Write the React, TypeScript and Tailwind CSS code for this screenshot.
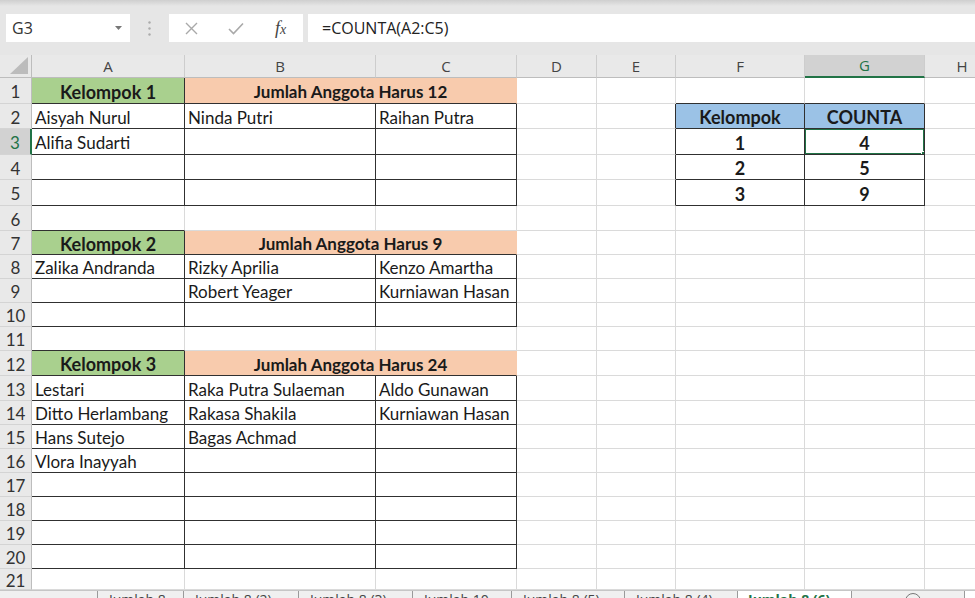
import React from "react";

const COLS = [
  { key: "A", w: "w-[153px]" },
  { key: "B", w: "w-[191px]" },
  { key: "C", w: "w-[141px]" },
  { key: "D", w: "w-[80px]" },
  { key: "E", w: "w-[79px]" },
  { key: "F", w: "w-[129px]" },
  { key: "G", w: "w-[120px]" },
  { key: "H", w: "w-[75px]" },
];

const ROW_H = [
  "h-[26px]", "h-[25px]", "h-[26px]", "h-[25px]", "h-[26px]", "h-[25px]", "h-[24px]",
  "h-[24px]", "h-[24px]", "h-[24px]", "h-[24px]", "h-[25px]", "h-[25px]", "h-[24px]",
  "h-[24px]", "h-[24px]", "h-[24px]", "h-[24px]", "h-[24px]", "h-[24px]", "h-[21px]",
];

const groups = [
  {
    head: 1,
    title: "Kelompok 1",
    note: "Jumlah Anggota Harus 12",
    data: [
      ["Aisyah Nurul", "Ninda Putri", "Raihan Putra"],
      ["Alifia Sudarti", "", ""],
      ["", "", ""],
      ["", "", ""],
    ],
  },
  {
    head: 7,
    title: "Kelompok 2",
    note: "Jumlah Anggota Harus 9",
    data: [
      ["Zalika Andranda", "Rizky Aprilia", "Kenzo Amartha"],
      ["", "Robert Yeager", "Kurniawan Hasan"],
      ["", "", ""],
    ],
  },
  {
    head: 12,
    title: "Kelompok 3",
    note: "Jumlah Anggota Harus 24",
    data: [
      ["Lestari", "Raka Putra Sulaeman", "Aldo Gunawan"],
      ["Ditto Herlambang", "Rakasa Shakila", "Kurniawan Hasan"],
      ["Hans Sutejo", "Bagas Achmad", ""],
      ["Vlora Inayyah", "", ""],
      ["", "", ""],
      ["", "", ""],
      ["", "", ""],
      ["", "", ""],
    ],
  },
];

const counta: { [key: number]: [string, string] } = {
  2: ["Kelompok", "COUNTA"],
  3: ["1", "4"],
  4: ["2", "5"],
  5: ["3", "9"],
};

const LIGHT = "border-r border-b border-[#dadada]";
const DARK = "border-r border-b border-[#303030]";

function Cell({ w, className = "", children }: { w: string; className?: string; children?: React.ReactNode }) {
  return (
    <div className={`${w} shrink-0 h-full flex items-center px-[3px] pt-[3px] whitespace-nowrap overflow-hidden relative ${className}`}>
      {children}
    </div>
  );
}

function Row({ r }: { r: number }) {
  const head = groups.find((g) => g.head === r);
  const data = groups.find((g) => r > g.head && r <= g.head + g.data.length);
  const aboveHead = groups.find((g) => g.head === r + 1);
  const selected = r === 3;

  return (
    <div className={`flex ${ROW_H[r - 1]} shrink-0`}>
      <div
        className={`w-[32px] shrink-0 flex items-center justify-center pt-[3px] text-[17px] border-b border-[#d4d4d4] ${
          selected
            ? "bg-[#d2d2d2] text-[#217346] border-r-2 border-r-[#217346]"
            : "bg-[#e9e9e9] text-[#333] border-r border-r-[#bdbdbd]"
        }`}
      >
        {r}
      </div>

      {head ? (
        <>
          <Cell w="w-[153px]" className={`${DARK} bg-[#a9d08e] justify-center font-bold text-[18px]`}>
            {head.title}
          </Cell>
          <Cell w="w-[332px]" className="border-r border-b border-r-[#f8cbad] border-b-[#303030] bg-[#f8cbad] justify-center font-bold text-[17px]">
            {head.note}
          </Cell>
        </>
      ) : data ? (
        <>
          {data.data[r - data.head - 1].map((t, i) => (
            <Cell key={i} w={COLS[i].w} className={`${DARK} text-[17px]`}>
              {t}
            </Cell>
          ))}
        </>
      ) : (
        <>
          <Cell w="w-[153px]" className={aboveHead ? "border-r border-b border-r-[#dadada] border-b-[#303030]" : LIGHT} />
          <Cell w="w-[191px]" className={LIGHT} />
          <Cell w="w-[141px]" className={LIGHT} />
        </>
      )}

      <Cell w="w-[80px]" className={LIGHT} />
      <Cell
        w="w-[79px]"
        className={r >= 2 && r <= 5 ? "border-r border-b border-r-[#303030] border-b-[#dadada]" : LIGHT}
      />
      {counta[r] ? (
        <>
          <Cell w="w-[129px]" className={`${DARK} justify-center font-bold text-[18px] ${r === 2 ? "bg-[#9bc2e6]" : ""}`}>
            {counta[r][0]}
          </Cell>
          <Cell w="w-[120px]" className={`${DARK} justify-center font-bold text-[18px] ${r === 2 ? "bg-[#9bc2e6]" : ""}`}>
            {counta[r][1]}
            {selected && (
              <>
                <div className="absolute -left-px -top-px right-[-1px] bottom-[-1px] border-2 border-[#217346]" />
                <div className="absolute right-[-3px] bottom-[-3px] w-[6px] h-[6px] bg-[#217346] border border-white" />
              </>
            )}
          </Cell>
        </>
      ) : (
        <>
          <Cell w="w-[129px]" className={r === 1 ? "border-r border-b border-r-[#dadada] border-b-[#303030]" : LIGHT} />
          <Cell w="w-[120px]" className={r === 1 ? "border-r border-b border-r-[#dadada] border-b-[#303030]" : LIGHT} />
        </>
      )}
      <Cell w="w-[75px]" className={LIGHT} />
    </div>
  );
}

const tabs = [
  { name: "Jumlah 8", w: "w-[86px]" },
  { name: "Jumlah 8 (2)", w: "w-[115px]" },
  { name: "Jumlah 8 (3)", w: "w-[114px]" },
  { name: "Jumlah 10", w: "w-[99px]" },
  { name: "Jumlah 8 (5)", w: "w-[113px]" },
  { name: "Jumlah 8 (4)", w: "w-[113px]" },
];

export default function App() {
  return (
    <div className="w-[975px] h-[598px] overflow-hidden bg-[#e6e6e6] flex flex-col font-['Lato',sans-serif] text-[#1a1a1a]">
      {/* formula bar */}
      <div className="h-[55px] shrink-0 flex flex-col">
        <div className="h-[6px] bg-gradient-to-b from-[#cfcfcf] to-[#e6e6e6]" />
        <div className="mt-[8px] h-[28px] flex pl-[6px] font-['Open_Sans',sans-serif]">
          <div className="w-[124px] bg-white flex items-center justify-between pl-[6px] pr-[8px] text-[16px] text-[#333]">
            <span>G3</span>
            <svg width="7" height="4" viewBox="0 0 7 4">
              <path d="M0 0 L7 0 L3.5 4 Z" fill="#777" />
            </svg>
          </div>
          <div className="w-[39px] flex items-center justify-center">
            <svg width="3" height="15" viewBox="0 0 3 15">
              <circle cx="1.5" cy="1.5" r="1.2" fill="#ababab" />
              <circle cx="1.5" cy="7.5" r="1.2" fill="#ababab" />
              <circle cx="1.5" cy="13.5" r="1.2" fill="#ababab" />
            </svg>
          </div>
          <div className="w-[134px] bg-white flex items-center">
            <div className="flex-1 flex justify-center">
              <svg width="13" height="13" viewBox="0 0 13 13">
                <path d="M1 1 L12 12 M12 1 L1 12" stroke="#a9a9a9" strokeWidth="1.4" />
              </svg>
            </div>
            <div className="flex-1 flex justify-center">
              <svg width="16" height="13" viewBox="0 0 16 13">
                <path d="M1 7 L5.5 11.5 L15 1.5" stroke="#a9a9a9" strokeWidth="1.6" fill="none" />
              </svg>
            </div>
            <div className="flex-1 flex justify-center font-['Liberation_Serif',serif] italic text-[18px] text-[#444] leading-none">
              <span>f</span>
              <span className="text-[14px] mt-[4px]">x</span>
            </div>
          </div>
          <div className="flex-1 ml-[5px] bg-white flex items-center pl-[14px] text-[16px] text-[#222]">
            =COUNTA(A2:C5)
          </div>
        </div>
      </div>

      {/* grid */}
      <div className="flex-1 overflow-hidden bg-white flex flex-col">
        <div className="h-[23px] shrink-0 flex bg-[#e9e9e9] font-['Open_Sans',sans-serif] text-[15px] text-[#444]">
          <div className="w-[32px] shrink-0 border-r border-b border-[#bdbdbd] flex items-end justify-end pr-[3px] pb-[3px]">
            <svg width="18" height="17" viewBox="0 0 18 17">
              <path d="M18 0 L18 17 L0 17 Z" fill="#bcbcbc" />
            </svg>
          </div>
          {COLS.map((c) => (
            <div
              key={c.key}
              className={`${c.w} shrink-0 flex items-center justify-center border-r border-[#cdcdcd] ${
                c.key === "G"
                  ? "bg-[#d2d2d2] text-[#217346] border-b-2 border-b-[#217346]"
                  : "border-b border-b-[#bdbdbd]"
              }`}
            >
              {c.key}
            </div>
          ))}
        </div>
        {Array.from({ length: 21 }, (_, i) => (
          <Row key={i} r={i + 1} />
        ))}
      </div>

      {/* sheet tabs */}
      <div className="h-[8px] shrink-0 overflow-hidden flex bg-[#f0f0f0] border-t border-[#c6c6c6] font-['Open_Sans',sans-serif] text-[14px] leading-none text-[#444]">
        <div className="w-[98px] shrink-0 border-r border-[#9a9a9a]" />
        {tabs.map((t) => (
          <div key={t.name} className={`${t.w} shrink-0 border-r border-[#9a9a9a] pl-[11px] pt-[2px] whitespace-nowrap`}>
            {t.name}
          </div>
        ))}
        <div className="w-[114px] shrink-0 bg-white border-r border-[#9a9a9a] -mt-px pl-[10px] pt-[3px] font-bold text-[#217346] whitespace-nowrap">
          Jumlah 8 (6)
        </div>
        <div className="w-[113px] shrink-0 flex justify-center pt-[2px] pl-[10px] border-r border-[#9a9a9a]">
          <div className="w-[16px] h-[16px] rounded-full border border-[#777]" />
        </div>
        <div className="flex-1 bg-white" />
      </div>
    </div>
  );
}
